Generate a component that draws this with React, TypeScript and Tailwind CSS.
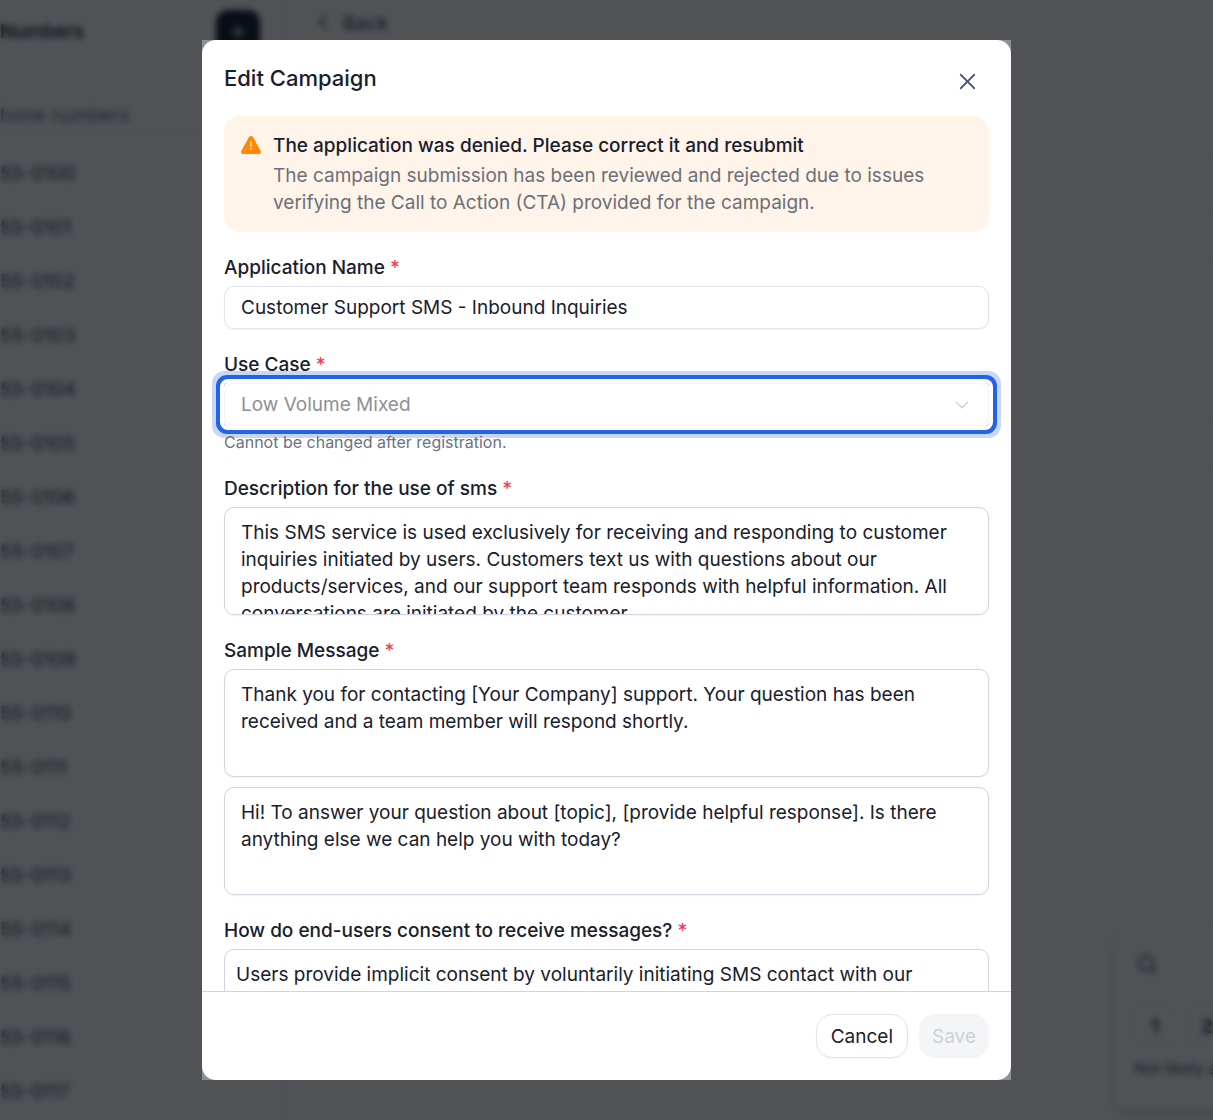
import { ChevronDown, ChevronLeft, Plus, Search, X } from "lucide-react";
import type { ReactNode } from "react";

const phoneNumbers = Array.from(
	{ length: 18 },
	(_, i) => `55-${String(100 + i).padStart(4, "0")}`
);

const sampleMessages = [
	"Thank you for contacting [Your Company] support. Your question has been received and a team member will respond shortly.",
	"Hi! To answer your question about [topic], [provide helpful response]. Is there anything else we can help you with today?",
];

const textareaClass =
	"block w-full h-[108px] resize-none overflow-hidden rounded-[10px] border border-[#d3d3e2] bg-white px-4 py-[11px] shadow-xs outline-none";

type FieldProps = {
	id: string;
	label: string;
	children: ReactNode;
};

const Field = ({ id, label, children }: FieldProps) => {
	return (
		<div className="flex flex-col gap-[5px]">
			<label htmlFor={id} className="font-medium">
				{label} <span className="text-[#ef4056]">*</span>
			</label>
			{children}
		</div>
	);
};

const WarningIcon = () => {
	return (
		<svg
			viewBox="0 0 20 18"
			className="mt-1 h-[18px] w-5 shrink-0"
			aria-hidden="true">
			<path
				d="M7.8 1.3a2.5 2.5 0 0 1 4.4 0l7.4 13.4c.9 1.600-.1 3.300-1.900 3.300H2.300C.5 18-.5 16.300.4 14.700Z"
				fill="#ff8800"
			/>
			<path
				d="M10 6v4.500"
				stroke="#fff4e9"
				strokeWidth="1.300"
				strokeLinecap="round"
			/>
			<circle cx="10" cy="13.200" r=".9" fill="#fff4e9" />
		</svg>
	);
};

const Sidebar = () => {
	return (
		<aside className="w-[287px] shrink-0 border-r border-gray-200">
			<div className="flex h-[77px] items-start justify-between border-b border-gray-100 pt-2.5 pr-[26px]">
				<h2 className="pt-2 font-semibold text-gray-800">Numbers</h2>
				<button
					type="button"
					aria-label="Add number"
					className="flex size-11 items-center justify-center rounded-xl bg-gray-900 text-white">
					<Plus size={22} />
				</button>
			</div>
			<div className="mt-[19px] mr-6 border-y border-r border-gray-200">
				<input
					type="text"
					aria-label="Search"
					placeholder="hone numbers"
					className="block h-9 w-full placeholder:text-gray-500"
				/>
			</div>
			<ul className="mt-3 text-gray-700">
				{phoneNumbers.map((number) => (
					<li key={number} className="flex h-[54px] items-center">
						{number}
					</li>
				))}
			</ul>
		</aside>
	);
};

const SurveyCard = () => {
	return (
		<div className="absolute top-[927px] left-[1113px] flex h-[182px] w-[480px] flex-col rounded-xl border border-gray-200 bg-white px-5 shadow-lg">
			<div className="flex h-[77px] items-center px-0.5 pb-1.5 text-gray-700">
				<Search size={22} />
			</div>
			<div className="flex gap-2.5 font-semibold text-gray-800">
				{[1, 2, 3, 4, 5].map((score) => (
					<button
						key={score}
						type="button"
						className="size-[42px] rounded-lg border border-gray-200">
						{score}
					</button>
				))}
			</div>
			<p className="mt-2 text-base leading-[27px] text-gray-600">
				Not likely at all
			</p>
		</div>
	);
};

const Page = () => {
	return (
		<div
			className="absolute inset-0 flex overflow-hidden bg-white"
			aria-hidden="true">
			<Sidebar />
			<main className="flex-1">
				<div className="flex h-[153px] items-start gap-2 border-b border-gray-200 px-6 pt-2.5 font-medium text-gray-600">
					<ChevronLeft size={24} />
					<span>Back</span>
				</div>
				<div className="h-14 border-b border-gray-200" />
				<div className="h-12 border-b border-gray-200" />
				<div className="mr-[148px] h-[66px] border-b border-gray-100" />
				<div className="mr-[148px] h-12 border-b border-gray-100" />
				<div className="h-[53px] border-b border-gray-200" />
				<div className="h-12 border-b border-gray-200" />
			</main>
			<SurveyCard />
		</div>
	);
};

const EditCampaign = () => {
	return (
		<div className="h-full w-full max-w-[809px] bg-[#8f9092]">
			<div
				role="dialog"
				aria-modal="true"
				aria-labelledby="dialog-title"
				className="flex h-full flex-col overflow-hidden rounded-[14px] bg-white">
				<header className="flex h-[76px] shrink-0 items-center justify-between px-[22px]">
					<h1 id="dialog-title" className="text-[22px] font-medium">
						Edit Campaign
					</h1>
					<button
						type="button"
						aria-label="Close"
						className="mt-1.5 flex size-[43px] items-center justify-center text-[#4d586a]">
						<X size={27} strokeWidth={1.6} />
					</button>
				</header>

				<div className="flex min-h-0 flex-1 flex-col gap-[22px] overflow-y-auto px-[22px] [scrollbar-width:none]">
					<div
						role="alert"
						className="flex shrink-0 gap-3 rounded-2xl bg-[#fff4e9] py-4 pr-4 pl-[17px]">
						<WarningIcon />
						<div className="flex flex-col gap-[3px]">
							<p className="font-medium">
								The application was denied. Please correct it and resubmit
							</p>
							<p className="text-[#6b7078]">
								The campaign submission has been reviewed and rejected due to
								issues verifying the Call to Action (CTA) provided for the
								campaign.
							</p>
						</div>
					</div>

					<Field id="name" label="Application Name">
						<input
							id="name"
							type="text"
							defaultValue="Customer Support SMS - Inbound Inquiries"
							className="h-[43px] rounded-[10px] border border-[#e2e3ea] px-4 shadow-xs outline-none"
						/>
					</Field>

					<Field id="use-case" label="Use Case">
						<div className="grid items-center rounded-sm shadow-[0_0_0_4px_#ffffff,0_0_0_8px_#2563e6,0_0_0_12px_#c8d7f8]">
							<select
								id="use-case"
								disabled
								className="col-start-1 row-start-1 h-[43px] appearance-none rounded-[10px] border border-[#f3f3f7] bg-white px-4 text-[#8d9095] opacity-100">
								<option>Low Volume Mixed</option>
							</select>
							<ChevronDown
								size={22}
								strokeWidth={1.8}
								className="pointer-events-none col-start-1 row-start-1 mr-4 justify-self-end text-[#d3d5d9]"
							/>
						</div>
						<p className="text-base leading-[22px] text-[#6b7280]">
							Cannot be changed after registration.
						</p>
					</Field>

					<Field id="description" label="Description for the use of sms">
						<textarea
							id="description"
							className={textareaClass}
							defaultValue="This SMS service is used exclusively for receiving and responding to customer inquiries initiated by users. Customers text us with questions about our products/services, and our support team responds with helpful information. All conversations are initiated by the customer."
						/>
					</Field>

					<Field id="sample-0" label="Sample Message">
						<div className="flex flex-col gap-2.5">
							{sampleMessages.map((message, i) => (
								<textarea
									key={i}
									id={`sample-${i}`}
									aria-label={`Sample message ${i + 1}`}
									className={textareaClass}
									defaultValue={message}
								/>
							))}
						</div>
					</Field>

					<Field id="consent" label="How do end-users consent to receive messages?">
						<textarea
							id="consent"
							className="block h-[108px] w-full resize-none overflow-hidden rounded-[10px] border border-[#d3d3e2] px-[11px] py-[11px] outline-none"
							defaultValue="Users provide implicit consent by voluntarily initiating SMS contact with our"
						/>
					</Field>
				</div>

				<footer className="flex shrink-0 justify-end gap-[11px] border-t border-[#d3d3e2] px-[22px] py-[22px]">
					<button
						type="button"
						className="h-11 rounded-2xl border border-[#e2e3ea] px-3.5 shadow-xs">
						Cancel
					</button>
					<button
						type="button"
						disabled
						className="h-11 rounded-2xl bg-[#f3f5f7] px-[13px] text-[#cbd1da]">
						Save
					</button>
				</footer>
			</div>
		</div>
	);
};

const App = () => {
	return (
		<div className="relative h-screen overflow-hidden font-['Inter',sans-serif] text-[19px] leading-[27px] text-[#18202e]">
			<Page />
			<div className="absolute inset-0 flex justify-center bg-[#05080e]/70 px-4 py-10 backdrop-blur-[3px]">
				<EditCampaign />
			</div>
		</div>
	);
};

export default App;
